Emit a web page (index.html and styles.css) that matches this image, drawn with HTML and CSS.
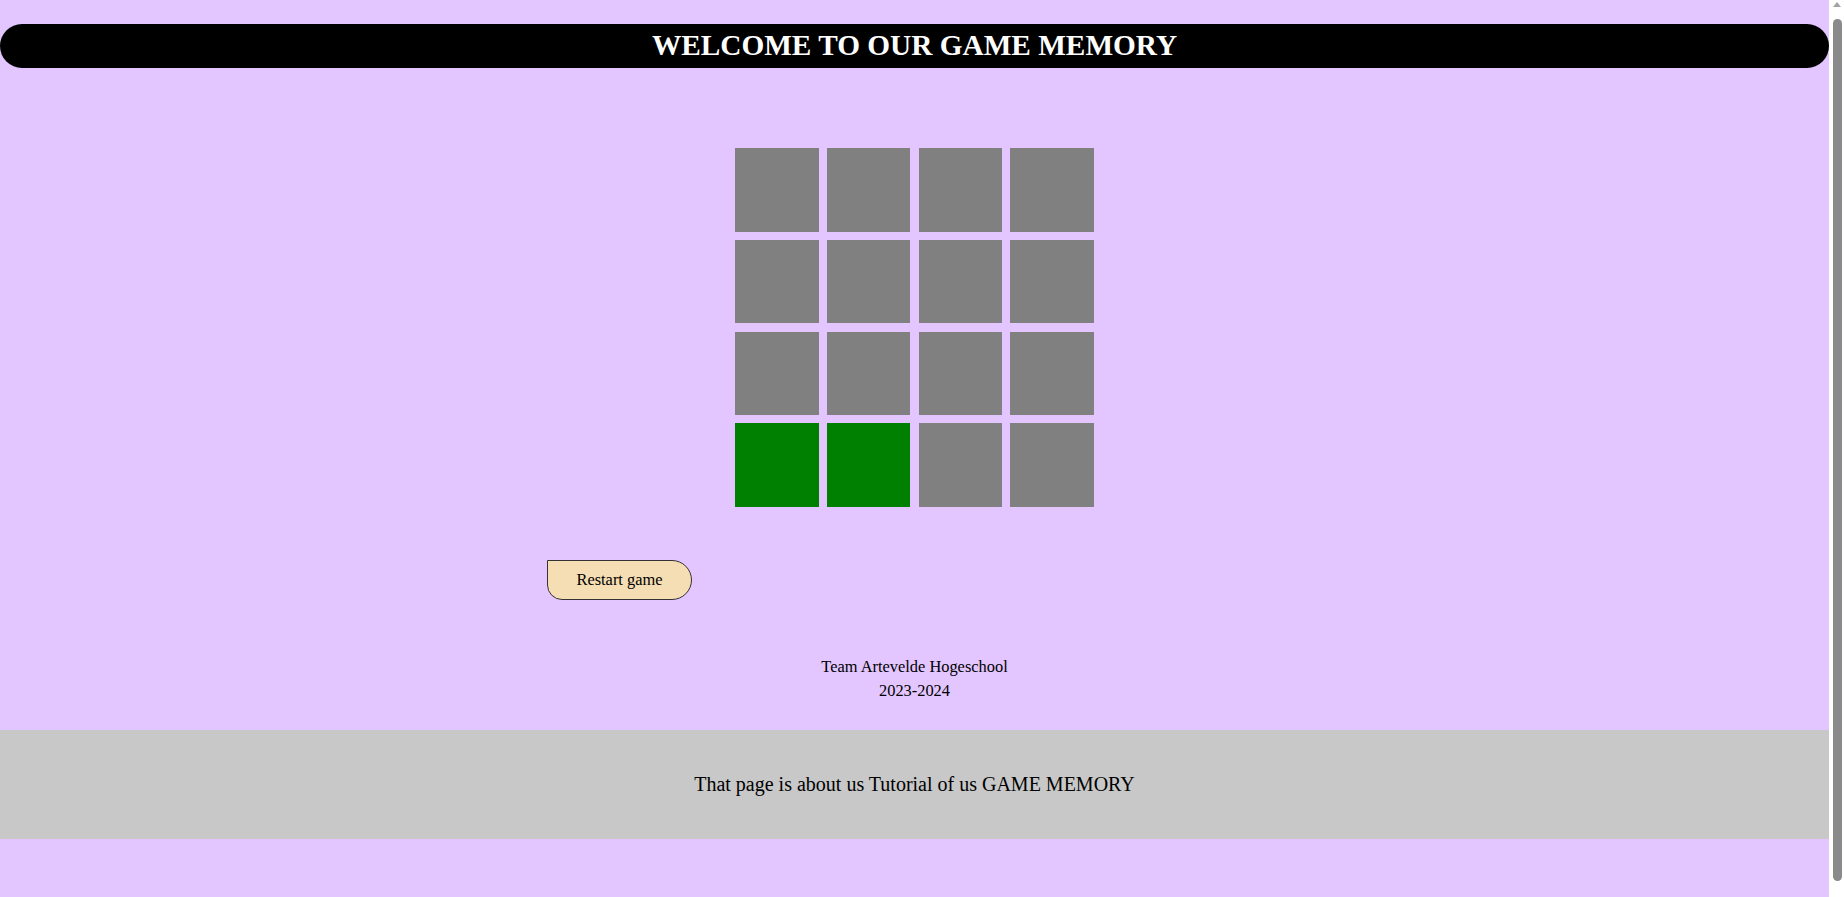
FILE: index.html
```html
<!DOCTYPE html>
<html lang="en">
<head>
<meta charset="utf-8">
<title>Game Memory</title>
<link rel="stylesheet" href="styles.css">
</head>
<body>
<header class="topbar">
  <h1 class="title">WELCOME TO OUR GAME MEMORY</h1>
</header>
<main class="game">
  <div class="board">
    <div class="tile"></div><div class="tile"></div><div class="tile"></div><div class="tile"></div>
    <div class="tile"></div><div class="tile"></div><div class="tile"></div><div class="tile"></div>
    <div class="tile"></div><div class="tile"></div><div class="tile"></div><div class="tile"></div>
    <div class="tile matched"></div><div class="tile matched"></div><div class="tile"></div><div class="tile"></div>
  </div>
  <div class="controls">
    <button class="restart">Restart game</button>
  </div>
  <div class="credits">
    <p class="credit-line">Team Artevelde Hogeschool</p>
    <p class="credit-line">2023-2024</p>
  </div>
</main>
<footer class="band">
  <p class="band-text">That page is about us Tutorial of us GAME MEMORY</p>
</footer>
<div class="scrollbar" aria-hidden="true">
  <div class="scroll-arrow"></div>
  <div class="scroll-thumb"></div>
</div>
</body>
</html>
```
FILE: styles.css
```css
html, body {
  margin: 0;
  padding: 0;
}
html {
  background: #e3c6ff;
}
body {
  background: #e3c6ff;
  font-family: "Liberation Serif", "Times New Roman", serif;
  color: #000;
  padding-top: 24px;
  padding-bottom: 72px;
  padding-right: 15px;
}
.topbar {
  height: 44px;
  background: #000;
  border-radius: 22px;
  display: flex;
  align-items: center;
  justify-content: center;
}
.title {
  margin: 0;
  color: #fff;
  font-size: 29.3px;
  font-weight: bold;
  line-height: 1;
}
.game {
  display: flex;
  flex-direction: column;
}
.board {
  margin: 80px auto 0;
  display: grid;
  grid-template-columns: repeat(4, 83.5px);
  grid-auto-rows: 83.5px;
  gap: 8.33px;
}
.tile {
  background: #808080;
}
.tile.matched {
  background: #008000;
}
.controls {
  margin-top: 53px;
  padding-left: 547px;
}
.restart {
  width: 145px;
  height: 40px;
  background: #f5deb3;
  border: 1px solid #333;
  border-radius: 0 20px 20px 15px;
  font-family: "Liberation Serif", "Times New Roman", serif;
  font-size: 16.4px;
  color: #000;
  padding: 1px 0 0;
}
.credits {
  margin-top: 55px;
  text-align: center;
  font-size: 16.4px;
  line-height: 24px;
}
.credit-line {
  margin: 0;
}
.band {
  margin-top: 27px;
  height: 109px;
  background: #c8c8c8;
  display: flex;
  align-items: center;
  justify-content: center;
}
.band-text {
  margin: 0;
  font-size: 20px;
}
.scrollbar {
  position: fixed;
  top: 0;
  right: 0;
  bottom: 0;
  width: 15px;
  background: #ffffff;
}
.scroll-arrow {
  position: absolute;
  top: 2px;
  left: 4px;
  width: 0;
  height: 0;
  border-left: 4px solid transparent;
  border-right: 4px solid transparent;
  border-bottom: 5px solid #a3a3a3;
}
.scroll-thumb {
  position: absolute;
  top: 19px;
  bottom: 16px;
  left: 4px;
  width: 9px;
  background: #8a8a8a;
  border-radius: 5px;
}
```
